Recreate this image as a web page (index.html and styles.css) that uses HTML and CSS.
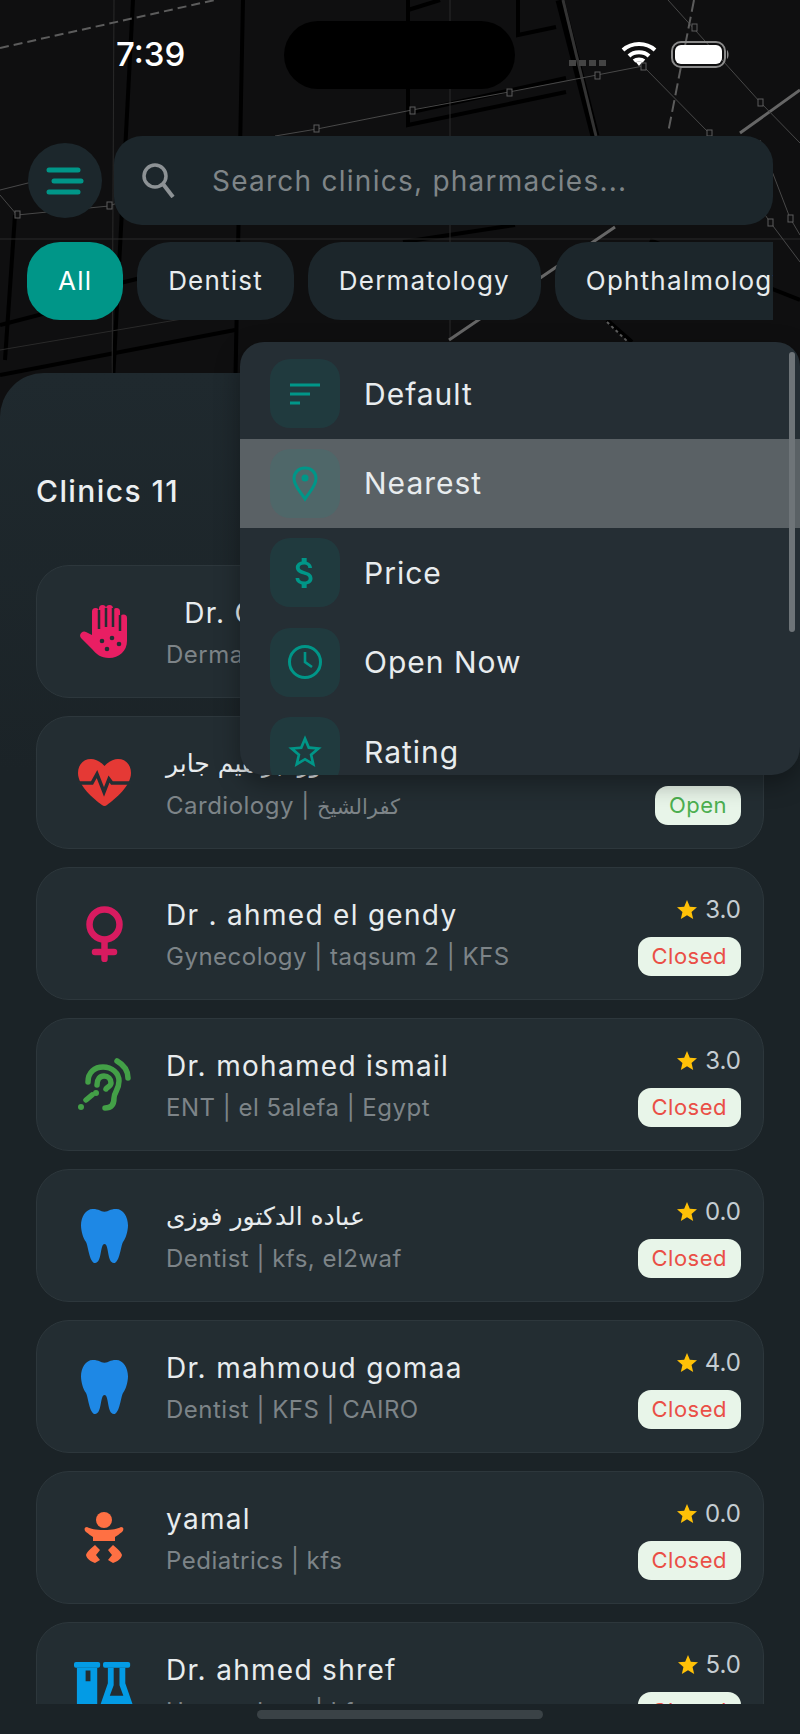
FILE: index.html
```html
<!DOCTYPE html>
<html lang="en">
<head>
    <meta charset="UTF-8">
    <meta name="viewport" content="width=device-width, initial-scale=1.0">
    <title>Clinics</title>
    <link rel="stylesheet" href="styles.css">
</head>
<body>
<div class="screen">
    <!-- map behind everything -->
    <svg class="map" width="800" height="400" viewBox="0 0 800 400" fill="none">
        <g stroke="#000" stroke-width="4">
            <path d="M133 0L112 400"/>
            <path d="M243 0L235 400"/>
            <path d="M408 0V125L566 92"/>
            <path d="M408 10L440 0"/>
            <path d="M518 0V35L556 27"/>
            <path d="M412 112L566 78"/>
            <path d="M515 225L403 242"/>
            <path d="M0 375L235 330"/>
            <path d="M0 325L112 296"/>
            <path d="M112 285L235 255"/>
            <path d="M15 215L5 360"/>
            <path d="M607 320L632 342"/>
            <path d="M650 240L800 300"/>
        </g>
        <path d="M560 0L595 136" stroke="#000" stroke-width="9"/>
        <path d="M563 0L596 136" stroke="#333" stroke-width="3"/>
        <g stroke="#2a2a2a" stroke-width="1">
            <path d="M450 0V340"/>
            <path d="M0 239H800"/>
            <path d="M114 0L112 400"/>
            <path d="M0 350L235 310"/>
        </g>
        <path d="M449 340L615 227M740 133L800 90" stroke="#666" stroke-width="3"/>
        <g stroke="#484848" stroke-width="1">
            <path d="M275 136L317 129L412 110L509 92L597 75L643 66"/>
            <path d="M668 0L760 102L800 143"/>
            <path d="M643 66L709 133L770 222L800 262"/>
            <path d="M760 140L790 218L800 235"/>
            <path d="M0 195L17 215L109 206L140 195"/>
            <path d="M0 190L60 175"/>
        </g>
        <path d="M0 48L215 0" stroke="#5c5c5c" stroke-width="2" stroke-dasharray="9 5"/>
        <path d="M694 0L668 133" stroke="#5c5c5c" stroke-width="2" stroke-dasharray="12 5"/>
        <path d="M607 322L628 342" stroke="#5c5c5c" stroke-width="2" stroke-dasharray="3 3"/>
        <g fill="#0f0f10" stroke="#5c5c5c" stroke-width="1">
            <rect x="314" y="125" width="5" height="7"/>
            <rect x="410" y="107" width="5" height="7"/>
            <rect x="507" y="89" width="5" height="7"/>
            <rect x="595" y="72" width="5" height="7"/>
            <rect x="641" y="63" width="5" height="7"/>
            <rect x="692" y="24" width="5" height="7"/>
            <rect x="758" y="99" width="5" height="7"/>
            <rect x="707" y="130" width="5" height="6"/>
            <rect x="768" y="219" width="5" height="7"/>
            <rect x="788" y="215" width="5" height="7"/>
            <rect x="15" y="211" width="5" height="7"/>
            <rect x="107" y="202" width="5" height="7"/>
        </g>
        <path d="M569 63H607" stroke="#444" stroke-width="6" stroke-dasharray="7 3"/>
    </svg>

    <div class="status">
        <span class="time">7:39</span>
        <div class="island"></div>
        <div class="status-icons">
            <svg width="36" height="26" viewBox="0 0 36 26" fill="none" stroke="#fff" stroke-width="4">
                <path d="M2 9C11 1 25 1 34 9"/>
                <path d="M8 15C13 10 23 10 28 15"/>
                <path d="M13 20C15.500 18 20.500 18 23 20"/>
                <path d="M14.500 20.500L18 25L21.500 20.500Z" fill="#fff" stroke="none"/>
            </svg>
            <svg width="59" height="27" viewBox="0 0 59 27" fill="none">
                <rect x="1" y="1" width="53" height="25" rx="9" stroke="#8a8a8a" stroke-width="2"/>
                <rect x="4" y="4" width="47" height="19" rx="6" fill="#fff"/>
                <path d="M56 9C58 10 58 17 56 18Z" fill="#8a8a8a"/>
            </svg>
        </div>
    </div>

    <div class="search-row">
        <div class="menu-btn">
            <svg width="38" height="30" viewBox="0 0 38 30" fill="none" stroke="#009688" stroke-width="5" stroke-linecap="round">
                <path d="M3 4H32"/>
                <path d="M8 15H35"/>
                <path d="M3 26H32"/>
            </svg>
        </div>
        <div class="search">
            <svg width="34" height="35" viewBox="0 0 34 35" fill="none" stroke="#8d9295" stroke-width="3.500">
                <circle cx="14" cy="13" r="11"/>
                <path d="M22 21L32 34" stroke-width="4"/>
            </svg>
            <span class="placeholder">Search clinics, pharmacies...</span>
        </div>
    </div>

    <div class="chips">
        <div class="chip active">All</div>
        <div class="chip">Dentist</div>
        <div class="chip">Dermatology</div>
        <div class="chip">Ophthalmology</div>
    </div>

    <div class="sheet">
        <h2 class="sheet-title">Clinics 11</h2>
        <div class="list">
            <div class="card">
                <div class="card-icon">
                    <svg width="50" height="53" viewBox="0 0 50 53">
                        <path fill="#e91e63" d="M13 30V6.500a3.500 3.500 0 0 1 7 0V3.500a3.500 3.500 0 0 1 7 0a3.500 3.500 0 0 1 7 0V6.500a3.500 3.500 0 0 1 7 0V13a3.500 3.500 0 0 1 7 0V36C48 46 40 53 30 53C22 53 17 49 13 44L2 33C-1 29 4 25 7 27Z"/>
                        <g stroke="#242e33" stroke-width="2">
                            <path d="M20 5V24M27 3V22M34 3V22M41 10V26" stroke-width="2.500"/>
                        </g>
                        <g fill="#242e33">
                            <circle cx="23" cy="36" r="2.300"/>
                            <circle cx="33" cy="33" r="2.300"/>
                            <circle cx="40" cy="39" r="2.300"/>
                            <circle cx="28" cy="44" r="2.300"/>
                        </g>
                    </svg>
                </div>
                <div class="card-text">
                    <div class="name">&nbsp;&nbsp;Dr. Omar</div>
                    <div class="sub">Dermatology | KFS</div>
                </div>
            </div>

            <div class="card">
                <div class="card-icon">
                    <svg width="53" height="47" viewBox="0 0 53 47" fill="none">
                        <path fill="#e53935" d="M26.500 7C22 2 17 0 13 0C5 0 0 6 0 14C0 27 16 40 24 46C25.500 47.300 27.500 47.300 29 46C37 40 53 27 53 14C53 6 48 0 40 0C36 0 31 2 26.500 7Z"/>
                        <path stroke="#242e33" stroke-width="3.500" d="M0 24H14L19 15L26 33L31 20L34 24H53"/>
                    </svg>
                </div>
                <div class="card-text">
                    <div class="name ar">دكتور ابراهيم جابر</div>
                    <div class="sub">Cardiology | <span class="ar">كفرالشيخ</span></div>
                </div>
                <div class="card-side">
                    <div class="rating"><svg width="24" height="24" viewBox="0 0 24 24"><path fill="#ffc107" d="M12 17.270L18.180 21l-1.640-7.030L22 9.240l-7.190-.610L12 2 9.190 8.630 2 9.240l5.460 4.730L5.820 21z"/></svg>4.0</div>
                    <div class="badge open">Open</div>
                </div>
            </div>

            <div class="card">
                <div class="card-icon">
                    <svg width="37" height="56" viewBox="0 0 37 56" fill="none" stroke="#d81b60" stroke-width="6.500" stroke-linecap="round">
                        <circle cx="18.500" cy="18.500" r="15"/>
                        <path d="M18.500 34V53"/>
                        <path d="M9 46H28"/>
                    </svg>
                </div>
                <div class="card-text">
                    <div class="name">Dr . ahmed el gendy</div>
                    <div class="sub">Gynecology | taqsum 2 | KFS</div>
                </div>
                <div class="card-side">
                    <div class="rating"><svg width="24" height="24" viewBox="0 0 24 24"><path fill="#ffc107" d="M12 17.270L18.180 21l-1.640-7.030L22 9.240l-7.190-.610L12 2 9.190 8.630 2 9.240l5.460 4.730L5.820 21z"/></svg>3.0</div>
                    <div class="badge closed">Closed</div>
                </div>
            </div>

            <div class="card">
                <div class="card-icon">
                    <svg width="53" height="53" viewBox="0 0 53 53" fill="none" stroke="#43a047" stroke-width="5.500" stroke-linecap="round">
                        <path d="M10 24C10 14 17 9 25 9C34 9 41 15 41 23C41 32 36 34 36 40C36 47 33 50 27 50"/>
                        <path d="M19 27C19 21 22 18 26 18C30 18 33 21 33 25C33 28 29 29 28 31"/>
                        <path d="M39 3C46 7 50 13 50 20"/>
                        <path d="M8 42L14 37"/>
                        <circle cx="18" cy="35" r="3" fill="#43a047" stroke="none"/>
                        <circle cx="3" cy="49" r="3" fill="#43a047" stroke="none"/>
                    </svg>
                </div>
                <div class="card-text">
                    <div class="name">Dr. mohamed ismail</div>
                    <div class="sub">ENT | el 5alefa | Egypt</div>
                </div>
                <div class="card-side">
                    <div class="rating"><svg width="24" height="24" viewBox="0 0 24 24"><path fill="#ffc107" d="M12 17.270L18.180 21l-1.640-7.030L22 9.240l-7.190-.610L12 2 9.190 8.630 2 9.240l5.460 4.730L5.820 21z"/></svg>3.0</div>
                    <div class="badge closed">Closed</div>
                </div>
            </div>

            <div class="card">
                <div class="card-icon">
                    <svg width="47" height="54" viewBox="2 2 20 20" preserveAspectRatio="none"><path fill="#1e88e5" d="M7 2C4 2 2 5 2 8C2 10.110 3 13 4 14C5 15 5.500 22 8 22C11 22 10 15 12 15C14 15 13 22 16 22C18.500 22 19 15 20 14C21 13 22 10.110 22 8C22 5 20 2 17 2C14 2 14 3 12 3C10 3 10 2 7 2Z"/></svg>
                </div>
                <div class="card-text">
                    <div class="name ar">عباده الدكتور فوزى</div>
                    <div class="sub">Dentist | kfs, el2waf</div>
                </div>
                <div class="card-side">
                    <div class="rating"><svg width="24" height="24" viewBox="0 0 24 24"><path fill="#ffc107" d="M12 17.270L18.180 21l-1.640-7.030L22 9.240l-7.190-.610L12 2 9.190 8.630 2 9.240l5.460 4.730L5.820 21z"/></svg>0.0</div>
                    <div class="badge closed">Closed</div>
                </div>
            </div>

            <div class="card">
                <div class="card-icon">
                    <svg width="47" height="54" viewBox="2 2 20 20" preserveAspectRatio="none"><path fill="#1e88e5" d="M7 2C4 2 2 5 2 8C2 10.110 3 13 4 14C5 15 5.500 22 8 22C11 22 10 15 12 15C14 15 13 22 16 22C18.500 22 19 15 20 14C21 13 22 10.110 22 8C22 5 20 2 17 2C14 2 14 3 12 3C10 3 10 2 7 2Z"/></svg>
                </div>
                <div class="card-text">
                    <div class="name">Dr. mahmoud gomaa</div>
                    <div class="sub">Dentist | KFS | CAIRO</div>
                </div>
                <div class="card-side">
                    <div class="rating"><svg width="24" height="24" viewBox="0 0 24 24"><path fill="#ffc107" d="M12 17.270L18.180 21l-1.640-7.030L22 9.240l-7.190-.610L12 2 9.190 8.630 2 9.240l5.460 4.730L5.820 21z"/></svg>4.0</div>
                    <div class="badge closed">Closed</div>
                </div>
            </div>

            <div class="card">
                <div class="card-icon">
                    <svg width="40" height="52" viewBox="0 0 40 52" fill="#ff7043">
                        <circle cx="20" cy="8" r="8"/>
                        <path d="M3 15C7 17 11 18 20 18C29 18 33 17 37 15C40 15 40 18 38 20C35 22 33 24 31 25V29H9V25C7 24 5 22 2 20C0 18 0 15 3 15Z"/>
                        <path d="M11 33L16 38L12 43L16 48L11 51C6 49 3 47 2 43C3 40 7 36 11 33Z"/>
                        <path d="M29 33L24 38L28 43L24 48L29 51C34 49 37 47 38 43C37 40 33 36 29 33Z"/>
                    </svg>
                </div>
                <div class="card-text">
                    <div class="name">yamal</div>
                    <div class="sub">Pediatrics | kfs</div>
                </div>
                <div class="card-side">
                    <div class="rating"><svg width="24" height="24" viewBox="0 0 24 24"><path fill="#ffc107" d="M12 17.270L18.180 21l-1.640-7.030L22 9.240l-7.190-.610L12 2 9.190 8.630 2 9.240l5.460 4.730L5.820 21z"/></svg>0.0</div>
                    <div class="badge closed">Closed</div>
                </div>
            </div>

            <div class="card">
                <div class="card-icon">
                    <svg width="62" height="56" viewBox="0 0 62 56" fill="#039be5">
                        <rect x="0" y="0" width="27" height="6" rx="2"/>
                        <path fill-rule="evenodd" d="M3 6H24V46C24 52 19 56 13.500 56C8 56 3 52 3 46ZM12 9V20H17V9Z"/>
                        <rect x="30" y="0" width="28" height="6" rx="2"/>
                        <path fill-rule="evenodd" d="M35 6H53V22L62 48C63 53 59 56 55 56H33C28 56 25 53 26 48L35 22ZM41 6V24L37 35H51L47 24V6Z"/>
                    </svg>
                </div>
                <div class="card-text">
                    <div class="name">Dr. ahmed shref</div>
                    <div class="sub">Hematology | kfs</div>
                </div>
                <div class="card-side">
                    <div class="rating"><svg width="24" height="24" viewBox="0 0 24 24"><path fill="#ffc107" d="M12 17.270L18.180 21l-1.640-7.030L22 9.240l-7.190-.610L12 2 9.190 8.630 2 9.240l5.460 4.730L5.820 21z"/></svg>5.0</div>
                    <div class="badge closed">Closed</div>
                </div>
            </div>
        </div>
        <div class="home-bar"><div class="home-line"></div></div>
    </div>

    <!-- sort menu, open over the sheet -->
    <div class="sort-menu">
        <div class="sort-item">
            <div class="sort-icon">
                <svg width="40" height="40" viewBox="0 0 40 40" fill="none" stroke="#009688" stroke-width="3.200">
                    <path d="M5 11H35M5 20H25M5 29H15"/>
                </svg>
            </div>
            Default
        </div>
        <div class="sort-item selected">
            <div class="sort-icon">
                <svg width="40" height="40" viewBox="0 0 40 40" fill="none" stroke="#009688" stroke-width="3">
                    <path d="M20 36C15 28 9 23 9 15.500C9 9 14 5 20 5C26 5 31 9 31 15.500C31 23 25 28 20 36Z"/>
                    <circle cx="20" cy="15" r="3.500" fill="#009688" stroke="none"/>
                </svg>
            </div>
            Nearest
        </div>
        <div class="sort-item">
            <div class="sort-icon">
                <svg width="40" height="40" viewBox="0 0 24 24"><path fill="#009688" d="M11.800 10.900c-2.270-.590-3-1.200-3-2.150 0-1.090 1.010-1.850 2.700-1.850 1.780 0 2.440.850 2.500 2.100h2.210c-.070-1.720-1.120-3.300-3.210-3.810V3h-3v2.160c-1.940.420-3.500 1.680-3.500 3.610 0 2.310 1.910 3.460 4.700 4.130 2.500.600 3 1.480 3 2.410 0 .690-.490 1.790-2.700 1.790-2.060 0-2.870-.920-2.980-2.100h-2.200c.120 2.190 1.760 3.420 3.680 3.830V21h3v-2.150c1.950-.370 3.500-1.500 3.500-3.550 0-2.840-2.430-3.810-4.700-4.400z"/></svg>
            </div>
            Price
        </div>
        <div class="sort-item">
            <div class="sort-icon">
                <svg width="40" height="40" viewBox="0 0 40 40" fill="none" stroke="#009688" stroke-width="3">
                    <circle cx="20" cy="20" r="15.500"/>
                    <path d="M20 10V20L27 25" stroke-width="2.600"/>
                </svg>
            </div>
            Open Now
        </div>
        <div class="sort-item">
            <div class="sort-icon">
                <svg width="40" height="40" viewBox="0 0 24 24"><path fill="#009688" d="M22 9.240l-7.190-.620L12 2 9.190 8.630 2 9.240l5.460 4.730L5.820 21 12 17.270 18.180 21l-1.630-7.030L22 9.240zM12 15.400l-3.760 2.270 1-4.280-3.320-2.880 4.380-.380L12 6.100l1.710 4.040 4.380.380-3.320 2.880 1 4.280L12 15.400z"/></svg>
            </div>
            Rating
        </div>
        <div class="scroll-thumb"></div>
    </div>
</div>
</body>
</html>
```

FILE: styles.css
```css
body {
    margin: 0;
    background-color: #0f0f10;
}
.screen {
    position: relative;
    display: flex;
    flex-direction: column;
    width: 800px;
    height: 1734px;
    overflow: hidden;
    background-color: #0f0f10;
    font-family: Inter, "DejaVu Sans", sans-serif;
}
.map {
    position: absolute;
    top: 0;
    left: 0;
}
.ar {
    font-family: "DejaVu Sans", sans-serif;
    letter-spacing: 0;
}

/* status bar */
.status {
    position: relative;
    display: flex;
    box-sizing: border-box;
    height: 136px;
    padding: 21px 70px 0 116px;
}
.time {
    width: 168px;
    height: 66px;
    font-size: 33px;
    line-height: 66px;
    font-weight: 500;
    color: #fff;
}
.island {
    width: 231px;
    height: 68px;
    border-radius: 34px;
    background-color: #000;
}
.status-icons {
    display: flex;
    align-items: flex-start;
    gap: 14px;
    margin-left: auto;
    padding-top: 20px;
}

/* search */
.search-row {
    position: relative;
    display: flex;
    align-items: center;
    gap: 12px;
    height: 89px;
    padding: 0 27px 0 28px;
}
.menu-btn {
    display: flex;
    align-items: center;
    justify-content: center;
    flex: none;
    width: 74px;
    height: 75px;
    border-radius: 50%;
    background-color: #1c272c;
}
.search {
    display: flex;
    align-items: center;
    gap: 37px;
    flex: 1;
    height: 89px;
    padding-left: 27px;
    border-radius: 28px;
    background-color: #1c262b;
}
.placeholder {
    font-size: 28px;
    letter-spacing: 1.250px;
    color: #7f8588;
}

/* chips */
.chips {
    position: relative;
    display: flex;
    gap: 14px;
    width: 746px;
    height: 78px;
    margin: 17px 0 0 27px;
    overflow: hidden;
}
.chip {
    flex: none;
    padding: 0 31px;
    border-radius: 33px;
    font-size: 26px;
    line-height: 78px;
    letter-spacing: 1.2px;
    color: #e8ecee;
    background-color: #1c262b;
}
.chip.active {
    color: #fff;
    background-color: #009688;
}

/* bottom sheet */
.sheet {
    position: relative;
    display: flex;
    flex-direction: column;
    flex: 1;
    min-height: 0;
    margin-top: 53px;
    border-radius: 44px 44px 0 0;
    background: linear-gradient(#1f292e, #1b2327 400px);
}
.sheet-title {
    height: 192px;
    margin: 0;
    padding-left: 36px;
    box-sizing: border-box;
    font-size: 30px;
    line-height: 236px;
    letter-spacing: 1.4px;
    font-weight: 500;
    color: #eceff1;
}
.list {
    display: flex;
    flex-direction: column;
    gap: 18px;
    flex: 1;
    min-height: 0;
    padding: 0 36px;
    overflow: hidden;
}
.home-bar {
    display: flex;
    justify-content: center;
    flex: none;
    height: 30px;
    padding-top: 6px;
    box-sizing: border-box;
}
.home-line {
    width: 286px;
    height: 9px;
    border-radius: 5px;
    background-color: #3a4246;
}

/* clinic cards */
.card {
    display: flex;
    align-items: center;
    flex: none;
    box-sizing: border-box;
    height: 133px;
    padding: 0 22px 0 37px;
    border: 1px solid #2d373c;
    border-radius: 33px;
    background-color: #232d32;
}
.card-icon {
    display: flex;
    justify-content: center;
    flex: none;
    width: 60px;
    margin-right: 32px;
}
.card-text {
    flex: 1;
    min-width: 0;
    padding-top: 2px;
    white-space: nowrap;
}
.name {
    font-size: 28px;
    line-height: 36px;
    letter-spacing: 1.3px;
    color: #e8ecee;
}
.name.ar {
    font-size: 25px;
    letter-spacing: 0;
}
.sub {
    margin-top: 9px;
    font-size: 24px;
    line-height: 30px;
    letter-spacing: 0.5px;
    color: #7d8488;
}
.sub .ar {
    font-size: 21px;
}
.card-side {
    display: flex;
    flex-direction: column;
    align-items: flex-end;
    gap: 13px;
    margin-top: 5px;
}
.rating {
    display: flex;
    align-items: center;
    gap: 6px;
    font-size: 24px;
    line-height: 28px;
    color: #c5cdd2;
}
.badge {
    padding: 0 14px;
    border-radius: 13px;
    font-size: 22px;
    line-height: 39px;
    letter-spacing: 0.5px;
    background-color: #e8f5e9;
}
.badge.open {
    color: #4caf50;
}
.badge.closed {
    color: #ea4f46;
}

/* sort menu */
.sort-menu {
    position: absolute;
    top: 342px;
    left: 240px;
    box-sizing: border-box;
    width: 560px;
    height: 433px;
    padding-top: 7px;
    overflow: hidden;
    border-radius: 24px 24px 28px 24px;
    background-color: #252e34;
    box-shadow: 0 8px 24px rgba(0, 0, 0, 0.35);
}
.sort-item {
    display: flex;
    align-items: center;
    gap: 24px;
    flex: none;
    box-sizing: border-box;
    height: 89.500px;
    padding-left: 30px;
    font-size: 30px;
    letter-spacing: 1px;
    color: #e8ecee;
}
.sort-item.selected {
    background-color: #5a6165;
}
.sort-icon {
    display: flex;
    align-items: center;
    justify-content: center;
    flex: none;
    width: 70px;
    height: 69px;
    border-radius: 20px;
    background-color: rgba(0, 150, 136, 0.12);
}
.scroll-thumb {
    position: absolute;
    top: 10px;
    right: 5px;
    width: 6px;
    height: 280px;
    border-radius: 3px;
    background-color: #6e7478;
}
```
